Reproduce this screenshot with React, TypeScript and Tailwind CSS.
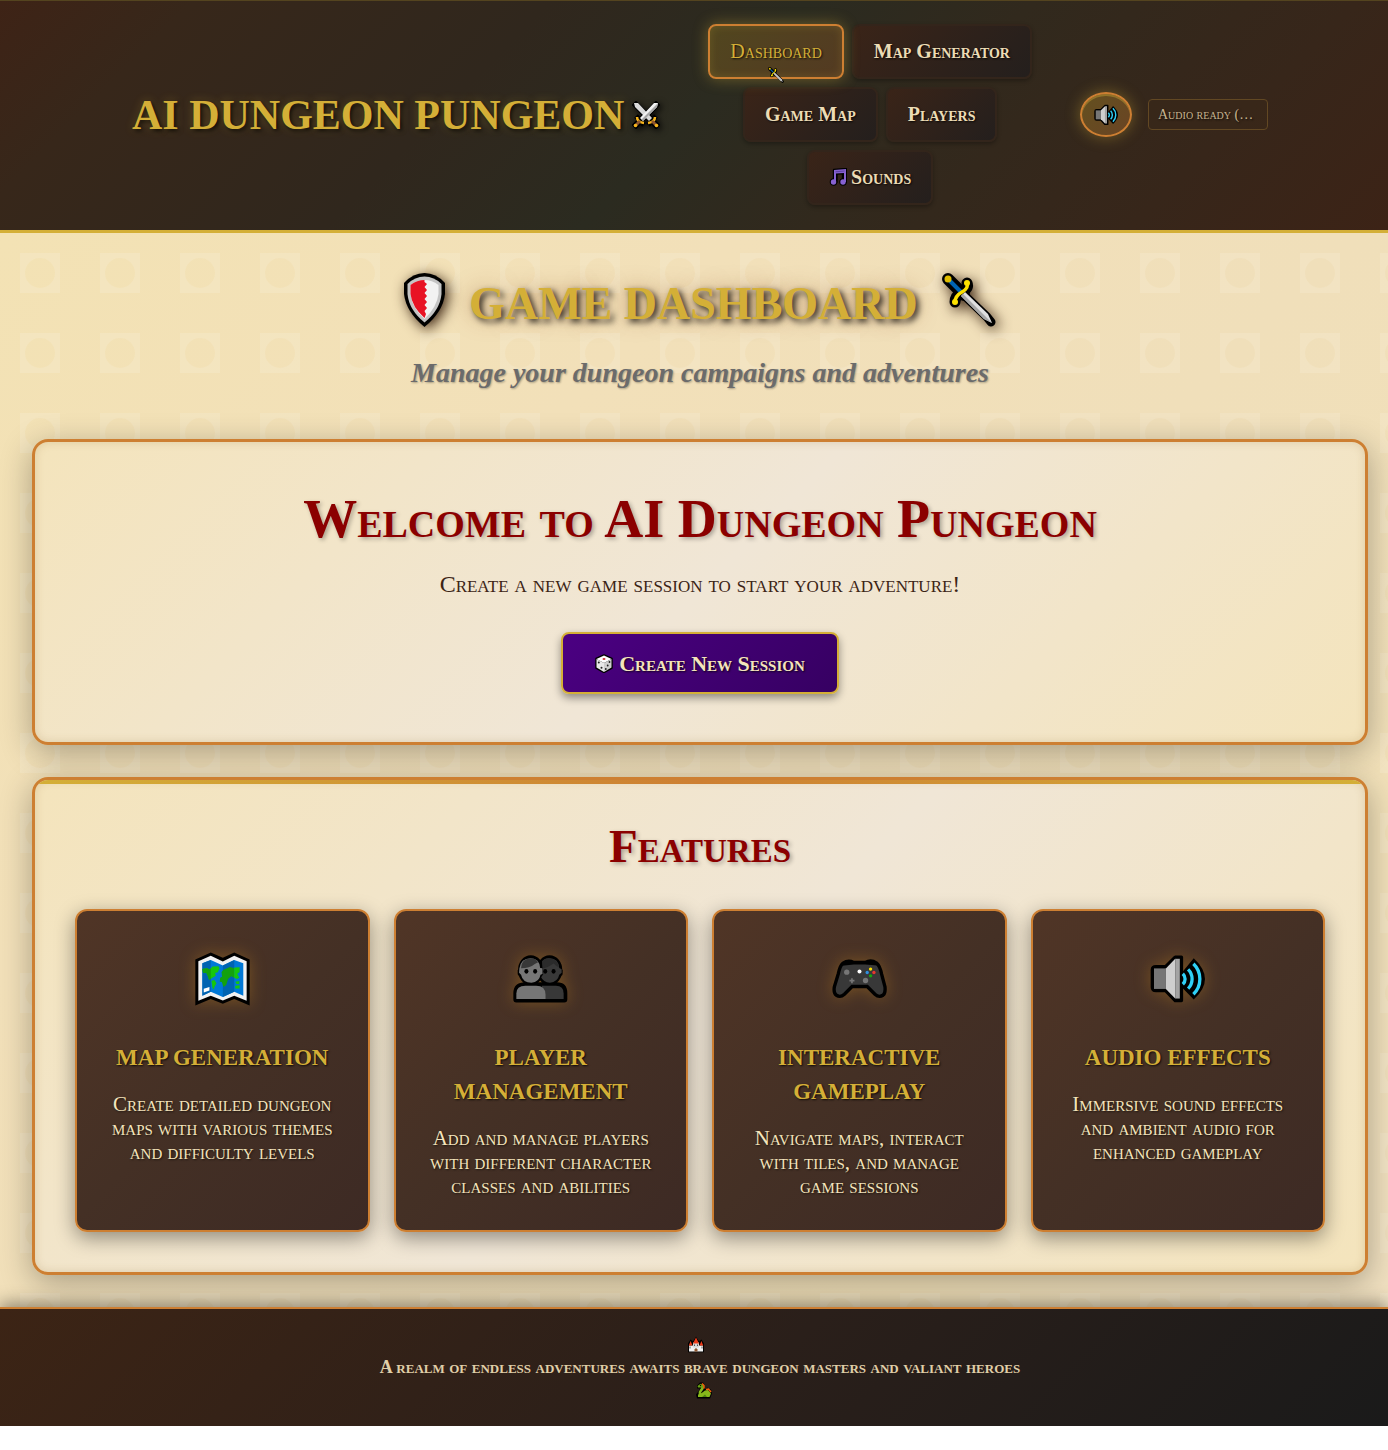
import React from "react";

type IconProps = { className?: string };

const Speaker = ({ className }: IconProps) => (
  <svg viewBox="390 190 166 150" className={className} aria-hidden="true">
    <path d="M408 228H437L466 199H485V330H466L437 300H408Q397 300 397 290V238Q397 228 408 228Z" fill="#000" stroke="#000" strokeWidth="10" strokeLinejoin="round" />
    <path d="M486 246L522 202Q556 234 556 265T522 327L486 290Z" fill="#000" />
    <path d="M402 233H438V295H402Z" fill="#767676" />
    <path d="M438 233L466 204V324L438 295Z" fill="#cecece" />
    <path d="M466 204H480V324H466Z" fill="#a3a3a3" />
    <g fill="none" stroke="#2fd0f7" strokeWidth="10">
      <path d="M489 249A22 22 0 0 1 489 281" />
      <path d="M505 236A41 41 0 0 1 505 294" />
      <path d="M521 219A64 64 0 0 1 521 311" />
    </g>
  </svg>
);

const WorldMap = ({ className }: IconProps) => (
  <svg viewBox="404 186 164 160" className={className} aria-hidden="true">
    <path d="M405 208L451 187L487 203L521 187L567 208V345L521 326L487 340L451 326L405 345Z" fill="#000" />
    <path d="M414 213L451 197L487 214L521 197L558 213V331L521 316L487 330L451 316L414 331Z" fill="#f2f2f2" />
    <path d="M426 219L451 209L487 226L521 209L548 219V316L521 304L487 320L451 304L426 316Z" fill="#0078d7" />
    <path d="M426 219L451 209V304L426 316ZM487 226L521 209V304L487 320Z" fill="#0063b1" />
    <path d="M426 236L440 234L448 238L456 229L474 228L477 234L472 246L464 248L466 256L456 262L446 268L442 256L438 248L428 248Z" fill="#16c60c" />
    <path d="M453 271L462 269L468 279L461 291V298L456 292Z" fill="#16c60c" />
    <path d="M426 236L440 234L448 238L451 234V267L446 268L442 256L438 248L428 248Z" fill="#13a10e" />
    <path d="M483 246L488 239L500 234L508 230L521 234V262L512 258L503 265L497 284L489 290L484 275L478 274L479 262L485 259Z" fill="#13a10e" />
    <path d="M521 232L537 231V245L530 250L536 262L529 266L521 262ZM524 274L536 272V281H528ZM524 286L537 285V294H524Z" fill="#16c60c" />
    <path d="M430 295L447 290V300L430 306Z" fill="#fff" />
  </svg>
);

const People = ({ className }: IconProps) => (
  <svg viewBox="401 203 164 144" className={className} aria-hidden="true">
    <g fill="#000" stroke="#000" strokeWidth="18" strokeLinejoin="round">
      <path d="M411 336V318Q411 294 438 294H532Q554 294 554 318V336Z" />
      <ellipse cx="454" cy="249" rx="29" ry="36" />
      <ellipse cx="510" cy="249" rx="29" ry="36" />
      <path d="M420 250H544V260H420Z" strokeWidth="10" />
    </g>
    <path d="M420 244Q424 213 454 213Q480 214 482 242L489 243V260L483 262Q479 284 456 286Q430 286 425 262L419 256Z" fill="#767676" />
    <path d="M425 243Q426 213 455 213Q468 213 476 225L466 230Q450 243 425 243Z" fill="#383838" />
    <path d="M488 222Q496 212 510 213Q537 214 539 242L546 246V256L539 262Q534 284 511 286Q491 285 485 270L491 261Z" fill="#383838" />
    <path d="M488 222Q496 212 510 213Q534 214 538 240Q531 238 522 229Q508 240 490 244Z" fill="#2b2b2b" />
    <path d="M487 295H529Q552 295 552 318V335H487Z" fill="#383838" />
    <path d="M411 335V318Q411 295 438 295H470Q498 295 498 322V335Z" fill="#767676" />
    <g fill="#000">
      <ellipse cx="441" cy="252" rx="6" ry="7" />
      <ellipse cx="467" cy="252" rx="6" ry="7" />
      <ellipse cx="497" cy="252" rx="6" ry="7" />
      <ellipse cx="522" cy="252" rx="6" ry="7" />
    </g>
  </svg>
);

const Gamepad = ({ className }: IconProps) => (
  <svg viewBox="395 206 164 121" className={className} aria-hidden="true">
    <path d="M428 219Q443 209 460 217H494Q512 208 528 219Q538 228 543 252L553 290Q555 309 547 315Q535 323 523 312L500 289H455L432 312Q420 323 408 315Q399 308 402 290L414 250Q419 226 428 219Z" fill="#383838" stroke="#000" strokeWidth="10" />
    <path d="M428 218Q443 210 460 218H494Q512 210 528 219L530 226L494 223H460L425 227Z" fill="#000" />
    <g fill="#767676">
      <circle cx="439" cy="246" r="8" />
      <circle cx="495" cy="271" r="8" />
      <path d="M452 264H457V269H462V274H457V279H452V274H447V269H452Z" />
    </g>
    <circle cx="477" cy="244" r="6" fill="#fff" />
    <circle cx="510" cy="237" r="5" fill="#fce100" />
    <circle cx="520" cy="247" r="5" fill="#e8362e" />
    <circle cx="500" cy="247" r="5" fill="#2f8fdd" />
    <circle cx="510" cy="257" r="5" fill="#16a80c" />
  </svg>
);

const Shield = ({ className }: IconProps) => (
  <svg viewBox="0 0 41 54" className={className} aria-hidden="true">
    <path d="M0 10Q9 0 20.500 0T41 10V21Q39 39 20.500 54Q2 39 0 21Z" fill="#000" />
    <path d="M3.500 11Q11 3.500 20.500 3.500T37.500 11V21Q36 37 20.500 49.500Q5 37 3.500 21Z" fill="#c4c4c4" />
    <path d="M6.500 12Q13 7 20.500 7T34.500 12V21Q33 34 20.500 46Q8 35 6.500 21Z" fill="#f2f2f2" />
    <path d="M6.500 12Q13 7 20.500 7V9L23 11L20.500 14L23 17L20.500 20L23 23L20.500 26L23 29L20.500 32L23 35L20.500 38L22 41L20.500 45Q8 34 6.500 21Z" fill="#e81224" />
  </svg>
);

const Dagger = ({ className }: IconProps) => (
  <svg viewBox="0 0 54 54" className={className} aria-hidden="true">
    <g fill="none" stroke="#000" strokeLinecap="round" strokeLinejoin="round">
      <path d="M6 6L22 22" strokeWidth="12" />
      <path d="M25 10Q27 15 20 19T13 29" strokeWidth="11" />
      <path d="M22 22L45 44L49 49" strokeWidth="9" />
    </g>
    <path d="M19 23L23 19L46 41L50 50L42 46Z" fill="#e0e0e0" />
    <path d="M19 23L21 21L50 50L42 46Z" fill="#a8a8a8" />
    <path d="M8 8L20 20" stroke="#0063b1" strokeWidth="4" />
    <circle cx="6" cy="6" r="3.500" fill="#e0bd00" />
    <path d="M25 10Q27 15 20 19T13 29" fill="none" stroke="#fce100" strokeWidth="3.500" strokeLinecap="round" />
    <circle cx="25" cy="10" r="3" fill="#fce100" />
    <circle cx="13" cy="29" r="3" fill="#fce100" />
  </svg>
);

const CrossedSwords = ({ className }: IconProps) => (
  <svg viewBox="0 0 28 28" className={className} aria-hidden="true">
    <g stroke="#000" strokeWidth="6.500" strokeLinecap="square">
      <path d="M4 4L24 24" />
      <path d="M24 4L4 24" />
    </g>
    <path d="M4 15L12 24M24 15L16 24" stroke="#000" strokeWidth="5" />
    <path d="M2 2H6L20 17L17 20L3 6Z" fill="#d9d9d9" />
    <path d="M26 2H22L8 17L11 20L25 6Z" fill="#f2f2f2" />
    <path d="M26 2L25 6L11 20L9.500 18.500Z" fill="#a6a6a6" />
    <path d="M5 16Q5 21 12 22M23 16Q23 21 16 22" fill="none" stroke="#f7b51c" strokeWidth="2.500" />
    <path d="M8 20L4 24M20 20L24 24" stroke="#8e562e" strokeWidth="3" />
    <circle cx="3.500" cy="24.500" r="1.800" fill="#f7b51c" />
    <circle cx="24.500" cy="24.500" r="1.800" fill="#f7b51c" />
  </svg>
);

const Notes = ({ className }: IconProps) => (
  <svg viewBox="0 0 18 18" className={className} aria-hidden="true">
    <g stroke="#000" strokeWidth="2.400" fill="#000" strokeLinejoin="round">
      <path d="M5 2L17 1V14H14V5L7.500 5.500V14H5Z" />
      <circle cx="4.500" cy="14" r="2.600" />
      <circle cx="14" cy="14" r="2.600" />
    </g>
    <path d="M5 2L17 1V14H15V5L7 5.500V14H5Z" fill="#8661d1" />
    <path d="M6.500 3.800L15.500 3" stroke="#5b3fa0" strokeWidth="1" />
    <circle cx="4.500" cy="14" r="2.700" fill="#8661d1" />
    <circle cx="14" cy="14" r="2.700" fill="#8661d1" />
  </svg>
);

const Die = ({ className }: IconProps) => (
  <svg viewBox="0 0 18 19" className={className} aria-hidden="true">
    <path d="M9 1L17 4.500V14L9 18.500L1 14V4.500Z" fill="#000" stroke="#000" strokeWidth="1.500" strokeLinejoin="round" />
    <path d="M9 1.500L16.500 5L9 9L1.500 5Z" fill="#fff" />
    <path d="M1.500 5L9 9V18L1.500 13.500Z" fill="#e8e8e8" />
    <path d="M16.500 5L9 9V18L16.500 13.500Z" fill="#cfcfcf" />
    <ellipse cx="9" cy="5" rx="1.500" ry="1" fill="#d13438" />
    <g fill="#222">
      <circle cx="3.800" cy="8.500" r="1" />
      <circle cx="6.500" cy="13.800" r="1" />
      <circle cx="14.500" cy="8" r=".9" />
      <circle cx="12.700" cy="11.500" r=".9" />
      <circle cx="10.800" cy="15" r=".9" />
    </g>
  </svg>
);

const Castle = ({ className }: IconProps) => (
  <svg viewBox="0 0 16 16" className={className} aria-hidden="true">
    <path d="M0 15.800V7L2.500 3L5 5L8 0L11 5L13.500 3L16 7V15.800Z" fill="#000" />
    <path d="M1 15V9H15V15Z" fill="#f2f2f2" />
    <path d="M5 6H11V11H5Z" fill="#d9d9d9" />
    <path d="M8 1L11 7H5ZM2.600 4.500L4.500 9H.8ZM13.400 4.500L15.200 9H11.500Z" fill="#f03a17" />
    <path d="M2 10V12M14 10V12M6.500 8V9.500M9.500 8V9.500" stroke="#555" strokeWidth="1" />
    <path d="M6.500 15V13Q8 10.500 9.500 13V15Z" fill="#8e562e" />
  </svg>
);

const Dragon = ({ className }: IconProps) => (
  <svg viewBox="0 0 16 16" className={className} aria-hidden="true">
    <path d="M1 3L4 0H7L9 3V7L11 5L15 7L16 11L14 16H1L0 12L3 8L4 6H1Z" fill="#000" />
    <path d="M4.500 4Q5.500 2.500 6.500 4Q7 6 5 8Q2.500 11 5.500 12.500" fill="none" stroke="#86b81b" strokeWidth="2.600" />
    <path d="M1.500 3.500L4.500 1.200L7 3V5H2Z" fill="#6aa314" />
    <path d="M2 14.500V12L5 11L9 8L12 7.500L15 11L13.500 14.500Z" fill="#86b81b" />
    <path d="M6 14.500L9 12L11 14.500Z" fill="#4f8210" />
    <path d="M6 1L8 3V6M10 7L12.500 6.500L15 9.500" fill="none" stroke="#f7630c" strokeWidth="1.500" />
    <circle cx="4.500" cy="3" r=".7" fill="#000" />
  </svg>
);

const navItems = [
  { label: "Map Generator" },
  { label: "Game Map" },
  { label: "Players" },
  { label: "Sounds", icon: Notes },
];

const features = [
  {
    title: "Map Generation",
    text: "Create detailed dungeon maps with various themes and difficulty levels",
    Icon: WorldMap,
  },
  {
    title: "Player Management",
    text: "Add and manage players with different character classes and abilities",
    Icon: People,
  },
  {
    title: "Interactive Gameplay",
    text: "Navigate maps, interact with tiles, and manage game sessions",
    Icon: Gamepad,
  },
  {
    title: "Audio Effects",
    text: "Immersive sound effects and ambient audio for enhanced gameplay",
    Icon: Speaker,
  },
];

const panel =
  "rounded-2xl border-[3px] border-[#cd7f32] bg-[linear-gradient(135deg,#f4e4bc_0%,#f0e6d6_50%,#f4e4bc_100%)] shadow-[0_8px_32px_rgba(0,0,0,0.3),inset_0_0_10px_rgba(139,100,40,0.2)]";

function Header() {
  return (
    <header className="border-t border-b-[3px] border-t-[#54441f] border-b-[#d4af37] bg-[linear-gradient(135deg,#3e2316_0%,#37271a_12%,#30271d_34%,#2b2b20_50%,#31291d_64%,#37261a_84%,#3c2316_100%)] pl-3">
      <div className="mx-auto flex max-w-[1200px] items-center px-8 pt-[23px] pb-[25px]">
        <div className="flex shrink-0 items-center gap-2">
          <span className="text-[42px] leading-[48px] font-bold text-[#d4af37] uppercase [text-shadow:2px_2px_4px_rgba(0,0,0,0.8),0_0_10px_rgba(212,175,55,0.3)]">
            AI Dungeon Pungeon
          </span>
          <CrossedSwords className="size-7 drop-shadow-[2px_2px_3px_rgba(0,0,0,0.8)]" />
        </div>
        <nav className="flex flex-1 flex-wrap justify-center gap-2 px-8">
          <a
            href="#dashboard"
            aria-current="page"
            className="relative flex h-[55px] items-center rounded-lg border-2 border-[#cd7f32] bg-[linear-gradient(135deg,#51461f,#533a22)] px-5 pb-0.5 text-[20px] text-[#d4af37] shadow-[0_0_15px_rgba(212,175,55,0.4),inset_0_0_10px_rgba(212,175,55,0.2)] [font-variant-caps:small-caps] [text-shadow:1px_1px_2px_rgba(0,0,0,0.8)]"
          >
            Dashboard
            <Dagger className="absolute -bottom-1.5 left-1/2 size-4 -translate-x-1/2" />
          </a>
          {navItems.map(({ label, icon: Icon }) => (
            <a
              key={label}
              href={"#" + label.toLowerCase().replace(" ", "-")}
              className="flex h-[55px] items-center gap-1 rounded-lg border-2 border-[#33251b] bg-[linear-gradient(135deg,#3a2418,#241f1d)] px-5 pb-0.5 text-[20px] font-bold text-[#ecdcb5] shadow-[0_2px_4px_rgba(0,0,0,0.3)] [font-variant-caps:small-caps] [text-shadow:1px_1px_2px_rgba(0,0,0,0.8)]"
            >
              {Icon && <Icon className="size-[18px]" />}
              {label}
            </a>
          ))}
        </nav>
        <div className="flex shrink-0 items-center gap-4">
          <button
            type="button"
            aria-label="Toggle audio"
            className="flex h-[45px] w-[52px] items-center justify-center rounded-[50%] border-2 border-[#cd7f32] bg-[linear-gradient(135deg,#63501f,#6a4424)] shadow-[0_0_15px_rgba(212,175,55,0.4),inset_0_2px_0_rgba(212,175,55,0.4)]"
          >
            <Speaker className="h-[22px] w-6" />
          </button>
          <div className="w-[120px] truncate rounded border border-[#624823] bg-[#3a2718]/50 px-[9px] text-[14px] leading-[29px] text-[#c8b590] [font-variant-caps:small-caps] [text-shadow:1px_1px_2px_rgba(0,0,0,0.8)]">
            Audio ready (…
          </div>
        </div>
      </div>
    </header>
  );
}

export default function App() {
  return (
    <div className="font-['Liberation_Serif',serif]">
      <Header />
      <main className="relative isolate overflow-hidden bg-[linear-gradient(135deg,#f3e2b4_0%,#f2e0b9_30%,#f0dfba_55%,#f1e0b8_80%,#f0e0c0_100%)] pt-8 pr-5 pb-8 pl-8">
        <svg className="absolute inset-0 -z-10 size-full" aria-hidden="true">
          <defs>
            <pattern id="tiles" width="80" height="80" patternUnits="userSpaceOnUse">
              <path
                d="M20 20H60V60H20ZM40 25A15 15 0 1 0 40 55A15 15 0 1 0 40 25Z"
                fill="#f8efdc"
                fillOpacity=".25"
                fillRule="evenodd"
              />
            </pattern>
          </defs>
          <rect width="100%" height="100%" fill="url(#tiles)" />
        </svg>

        <div className="flex flex-col items-center text-center">
          <h1 className="flex h-[70px] items-center gap-6 text-[46px] leading-[66px] font-bold text-[#d4af37] uppercase [text-shadow:3px_3px_6px_rgba(0,0,0,0.8),0_0_20px_rgba(139,69,19,0.5)]">
            <Shield className="h-[54px] w-[41px] drop-shadow-[3px_3px_7px_rgba(40,15,0,0.9)]" />
            <span className="pt-2">Game Dashboard</span>
            <Dagger className="size-[54px] drop-shadow-[3px_3px_7px_rgba(40,15,0,0.9)]" />
          </h1>
          <p className="mt-4 mb-11 text-[28px] leading-[44px] font-bold text-[#6b6b6b] italic [text-shadow:1px_1px_2px_rgba(0,0,0,0.3)]">
            Manage your dungeon campaigns and adventures
          </p>
        </div>

        <section className={panel + " px-10 pt-[45px] pb-12 text-center"}>
          <h2 className="text-[54px] leading-[64px] font-bold text-[#8b0000] [font-variant-caps:small-caps] [text-shadow:2px_2px_4px_rgba(0,0,0,0.3)]">
            Welcome to AI Dungeon Pungeon
          </h2>
          <p className="mt-[17px] text-[24px] leading-8 text-[#3c2415] [font-variant-caps:small-caps]">
            Create a new game session to start your adventure!
          </p>
          <button
            type="button"
            className="mx-auto mt-8 flex h-[62px] items-center gap-1.5 rounded-lg border-2 border-[#d4af37] bg-[linear-gradient(135deg,#4b0082,#360062)] px-8 text-[22px] font-bold text-[#f4e4bc] shadow-[0_4px_8px_rgba(0,0,0,0.4)] [font-variant-caps:small-caps] [text-shadow:1px_1px_2px_rgba(0,0,0,0.8)]"
          >
            <Die className="h-[19px] w-[18px]" />
            Create New Session
          </button>
        </section>

        <section className={panel + " mt-8 overflow-hidden text-center"}>
          <div className="h-1 bg-[linear-gradient(90deg,#d4af37,#cd7f32,#d4af37)]" />
          <div className="px-10 pt-[34px] pb-10">
            <h2 className="text-[47px] leading-[56px] font-bold text-[#8b0000] [font-variant-caps:small-caps] [text-shadow:2px_2px_4px_rgba(0,0,0,0.3)]">
              Features
            </h2>
            <div className="mt-[35px] grid grid-cols-4 gap-6">
              {features.map(({ title, text, Icon }) => (
                <article
                  key={title}
                  className="rounded-xl border-2 border-[#cd7f32] bg-[linear-gradient(135deg,#503526_0%,#443025_50%,#3d2a24_100%)] px-8 py-8 shadow-[0_6px_20px_rgba(0,0,0,0.4)]"
                >
                  <div className="mb-[26px] flex h-[72px] items-center justify-center">
                    <Icon className="h-[54px] w-[55px] drop-shadow-[0_0_8px_rgba(190,130,30,0.4)]" />
                  </div>
                  <h3 className="text-[23px] leading-[34px] font-bold text-[#d4af37] uppercase [text-shadow:1px_1px_2px_rgba(0,0,0,0.8)]">
                    {title}
                  </h3>
                  <p className="mt-[17px] text-[21px] leading-6 text-[#f4e4bc] [font-variant-caps:small-caps] [text-shadow:1px_1px_2px_rgba(0,0,0,0.6)]">
                    {text}
                  </p>
                </article>
              ))}
            </div>
          </div>
        </section>
      </main>

      <footer className="relative flex flex-col items-center border-t-2 border-[#cd7f32] bg-[linear-gradient(135deg,#3c2415_0%,#2a1f1a_55%,#1a1a1a_100%)] pt-6 pb-6 pl-3 text-center text-[18px] leading-[23px] text-[#e0cfa8] shadow-[0_-4px_16px_rgba(0,0,0,0.4)] [font-variant-caps:small-caps]">
        <Castle className="mr-2 h-[23px] w-4" />
        <p className="font-bold">A realm of endless adventures awaits brave dungeon masters and valiant heroes</p>
        <Dragon className="ml-2 h-[23px] w-4" />
      </footer>
    </div>
  );
}
